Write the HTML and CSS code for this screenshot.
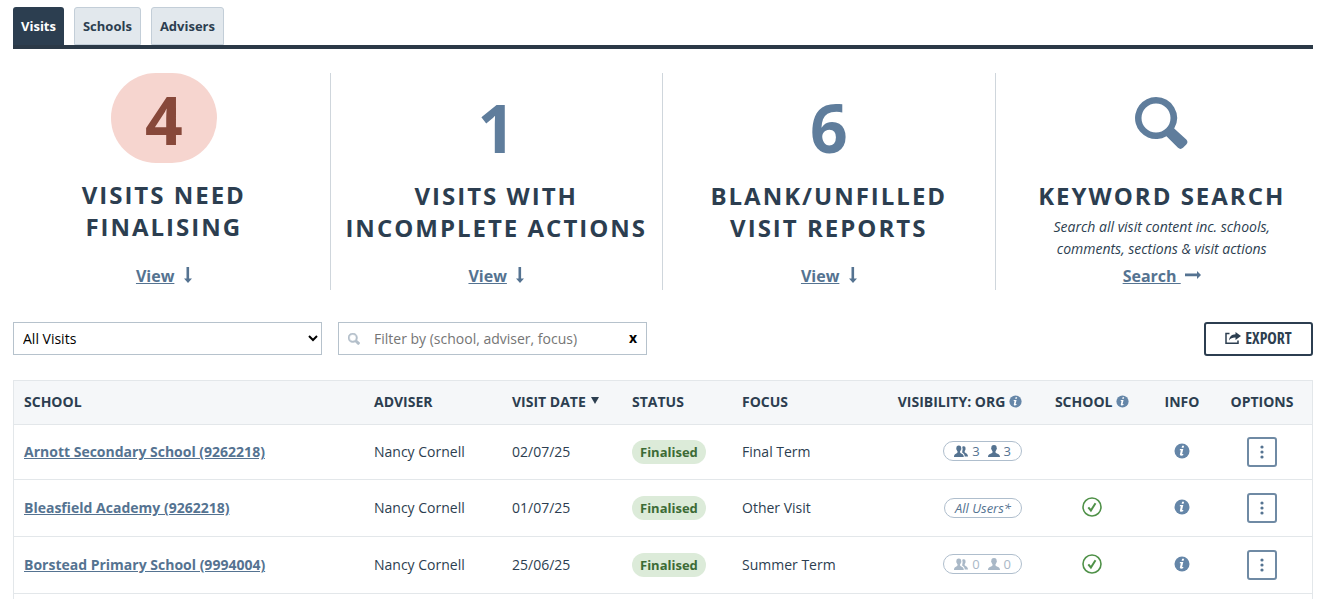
FILE: index.html
```html
<!DOCTYPE html>
<html lang="en">
<head>
    <meta charset="UTF-8">
    <meta name="viewport" content="width=device-width, initial-scale=1.0">
    <title>Visits</title>
    <link rel="stylesheet" href="styles.css">
</head>
<body>

    <!-- shared icons -->
    <svg class="sprite" aria-hidden="true">
        <symbol id="down" viewBox="0 0 8 16"><path d="M2.500 0h2.600v11.500H8L4 16 0 11.500h2.500z"/></symbol>
        <symbol id="right" viewBox="0 0 16 8"><path d="M0 2.600v2.600h12V8l4-4-4-4v2.600z"/></symbol>
        <symbol id="search" viewBox="0 0 53 53"><path fill-rule="evenodd" d="M21 0a21 21 0 1 0 10.500 39.200L43 50.800q2.500 2.200 5 0l3.300-3.300q2.300-2.500 0-5L39.200 31.500A21 21 0 0 0 21 0zm0 6.500a14.500 14.500 0 1 1 0 29 14.500 14.500 0 0 1 0-29z"/></symbol>
        <symbol id="info" viewBox="0 0 16 16"><circle cx="8" cy="8" r="7.500"/><path fill="#fff" d="M8.100 2.700h2l-.5 2h-2zM6 6h3.300l-1.200 5h1.300l-.3 1.300c-1 .6-3.500.9-3.200-.7L6.800 7.300H5.700z"/></symbol>
        <symbol id="user" viewBox="0 0 12 12"><path d="M6 0c2 0 2.800 1.200 2.700 2.900.4.500.2 1.300-.3 1.600-.2.900-.5 1.300-.9 1.700v1.400c.4 1 4.500 1.200 4.500 4.400H0c0-3.200 4.100-3.400 4.500-4.400V6.200c-.4-.4-.7-.8-.9-1.700-.5-.3-.7-1.100-.3-1.600C3.200 1.200 4 0 6 0z"/></symbol>
        <symbol id="users" viewBox="0 0 14 12"><path d="M4.800.5c1.800 0 2.500 1.100 2.400 2.700.4.500.2 1.200-.3 1.500-.2.800-.4 1.200-.8 1.600v1.300c.4 1 3.700 1.200 3.700 4.400H0c0-3.200 3.100-3.400 3.500-4.400V6.300c-.4-.4-.6-.8-.8-1.600-.5-.3-.7-1-.3-1.500C2.300 1.600 3 .5 4.800.5z"/><path d="M8.200 1.900c.5-.5 1-.6 1.500-.6 1.400 0 1.900.9 1.800 2.200.3.400.2 1-.2 1.200-.1.700-.3 1.100-.6 1.400v1.200c.4.900 3.300 1.200 3.300 4.200h-3.300c0-2.300-1.200-3.300-2.600-4.100.3-.4.200-1.500.2-1.500.5-1.300.3-2.800-.1-4z"/></symbol>
        <symbol id="tick" viewBox="0 0 20 20"><circle cx="10" cy="10" r="9" fill="none" stroke="currentColor" stroke-width="1.600"/><path d="M6.300 10.300l2.600 3.200 4.600-7.300" fill="none" stroke="currentColor" stroke-width="2"/></symbol>
        <symbol id="dots" viewBox="0 0 4 14"><circle cx="2" cy="2" r="1.600"/><circle cx="2" cy="7" r="1.600"/><circle cx="2" cy="12" r="1.600"/></symbol>
        <symbol id="export" viewBox="0 0 16 12"><path d="M4.500 1.500H1v9.800h12V8.500" fill="none" stroke="currentColor" stroke-width="1.500"/><path d="M10.500 0L16 4l-5.500 4V5.600C7.600 5.500 5.500 6.300 4 8.500 4.300 4.800 6.500 2.500 10.500 2.300z"/></symbol>
    </svg>

    <nav class="tabs">
        <a class="tab active" href="#">Visits</a>
        <a class="tab" href="#">Schools</a>
        <a class="tab" href="#">Advisers</a>
    </nav>

    <section class="summary">
        <div class="card">
            <div class="figure alert">4</div>
            <h2>Visits need finalising</h2>
            <p class="card-link"><a href="#">View</a> <svg class="icon-down"><use href="#down"/></svg></p>
        </div>
        <div class="card">
            <div class="figure">1</div>
            <h2>Visits with incomplete actions</h2>
            <p class="card-link"><a href="#">View</a> <svg class="icon-down"><use href="#down"/></svg></p>
        </div>
        <div class="card">
            <div class="figure">6</div>
            <h2>Blank/unfilled visit reports</h2>
            <p class="card-link"><a href="#">View</a> <svg class="icon-down"><use href="#down"/></svg></p>
        </div>
        <div class="card">
            <div class="figure"><svg class="icon-big"><use href="#search"/></svg></div>
            <h2>Keyword search</h2>
            <p class="hint">Search all visit content inc. schools, comments, sections &amp; visit actions</p>
            <p class="card-link"><a href="#">Search&nbsp;</a> <svg class="icon-right"><use href="#right"/></svg></p>
        </div>
    </section>

    <form class="toolbar">
        <select class="field" aria-label="Show visits">
            <option>All Visits</option>
        </select>
        <div class="field filter">
            <svg class="icon-search"><use href="#search"/></svg>
            <input type="text" aria-label="Filter visits" placeholder="Filter by (school, adviser, focus)">
            <button class="clear" type="button" aria-label="Clear filter">x</button>
        </div>
        <button class="export" type="button"><svg class="icon-export"><use href="#export"/></svg>EXPORT</button>
    </form>

    <table class="visits">
        <thead>
            <tr>
                <th>School</th>
                <th class="col-adviser">Adviser</th>
                <th class="col-date">Visit date <span class="sort"></span></th>
                <th class="col-status">Status</th>
                <th class="col-focus">Focus</th>
                <th class="col-org">Visibility: Org <svg class="icon-info small"><use href="#info"/></svg></th>
                <th class="col-school">School <svg class="icon-info small"><use href="#info"/></svg></th>
                <th class="col-info">Info</th>
                <th class="col-options">Options</th>
            </tr>
        </thead>
        <tbody>
            <tr>
                <td><a href="#">Arnott Secondary School (9262218)</a></td>
                <td>Nancy Cornell</td>
                <td>02/07/25</td>
                <td><span class="status">Finalised</span></td>
                <td>Final Term</td>
                <td class="col-org"><span class="pill"><svg class="icon-users"><use href="#users"/></svg>3<svg class="icon-user"><use href="#user"/></svg>3</span></td>
                <td class="col-school"></td>
                <td class="col-info"><svg class="icon-info"><use href="#info"/></svg></td>
                <td class="col-options"><button class="options" aria-label="Options"><svg class="icon-dots"><use href="#dots"/></svg></button></td>
            </tr>
            <tr>
                <td><a href="#">Bleasfield Academy (9262218)</a></td>
                <td>Nancy Cornell</td>
                <td>01/07/25</td>
                <td><span class="status">Finalised</span></td>
                <td>Other Visit</td>
                <td class="col-org"><span class="pill all">All Users*</span></td>
                <td class="col-school"><svg class="icon-tick"><use href="#tick"/></svg></td>
                <td class="col-info"><svg class="icon-info"><use href="#info"/></svg></td>
                <td class="col-options"><button class="options" aria-label="Options"><svg class="icon-dots"><use href="#dots"/></svg></button></td>
            </tr>
            <tr>
                <td><a href="#">Borstead Primary School (9994004)</a></td>
                <td>Nancy Cornell</td>
                <td>25/06/25</td>
                <td><span class="status">Finalised</span></td>
                <td>Summer Term</td>
                <td class="col-org"><span class="pill none"><svg class="icon-users"><use href="#users"/></svg>0<svg class="icon-user"><use href="#user"/></svg>0</span></td>
                <td class="col-school"><svg class="icon-tick"><use href="#tick"/></svg></td>
                <td class="col-info"><svg class="icon-info"><use href="#info"/></svg></td>
                <td class="col-options"><button class="options" aria-label="Options"><svg class="icon-dots"><use href="#dots"/></svg></button></td>
            </tr>
        </tbody>
        <tfoot>
            <tr><td colspan="9"></td></tr>
        </tfoot>
    </table>

</body>
</html>
```
FILE: styles.css
```css
* {
    box-sizing: border-box;
}
body {
    margin: 0;
    padding: 7px 11px 0 13px;
    overflow-x: hidden;
    font-family: "Open Sans", sans-serif;
    font-size: 14px;
    line-height: 22px;
    color: #2c3e50;
    background-color: #fff;
}
a {
    color: #557391;
}
svg {
    fill: currentColor;
}
.sprite {
    display: none;
}

/* tabs */
.tabs {
    display: flex;
    gap: 10px;
    border-bottom: 4px solid #2b3947;
}
.tab {
    padding: 8px;
    border: 1px solid #c3ced8;
    border-radius: 3px 3px 0 0;
    background-color: #e2e8ed;
    color: #2c3e50;
    font-size: 13px;
    line-height: 20px;
    font-weight: 700;
    text-decoration: none;
}
.tab.active {
    padding: 9px 8px;
    border: none;
    background-color: #2c3e50;
    color: #fff;
}

/* summary cards */
.summary {
    display: grid;
    grid-template-columns: repeat(4, 1fr);
    margin: 24px -15px 0;
}
.card {
    display: flex;
    flex-direction: column;
    align-items: center;
    min-height: 217px;
    padding: 0 14px;
    border-right: 1px solid #cfd6dc;
    text-align: center;
}
.card:last-child {
    border-right: none;
}
.figure {
    height: 98px;
    padding: 8px 34px 0;
    font-size: 66px;
    line-height: 92px;
    font-weight: 700;
    color: #5f7d9c;
}
.figure.alert {
    height: 90px;
    margin-bottom: 7px;
    padding-top: 0;
    border-radius: 45px;
    background-color: #f6d5cf;
    color: #87483a;
}
.card h2 {
    margin: 9px 0 0;
    font-size: 24px;
    line-height: 32px;
    font-weight: 700;
    letter-spacing: 2px;
    text-transform: uppercase;
}
.hint {
    max-width: 240px;
    margin: 4px 0 0;
    font-style: italic;
}
.card-link {
    margin: auto 0 3px;
    font-size: 16px;
    font-weight: 700;
    color: #557391;
}
.icon-down {
    width: 8px;
    height: 16px;
    margin-left: 5px;
    vertical-align: -1px;
}
.icon-right {
    width: 16px;
    height: 8px;
    margin-bottom: 3px;
}
.icon-big {
    display: block;
    width: 53px;
    height: 53px;
    margin-top: 16px;
}

/* toolbar */
.toolbar {
    display: flex;
    gap: 16px;
    margin: 32px 0 24px;
}
.field {
    width: 309px;
    height: 33px;
    padding: 0 5px;
    border: 1px solid #b6c2cc;
    border-radius: 0;
    background-color: #fff;
    font: 14px "Open Sans", sans-serif;
    color: #000;
}
.filter {
    display: flex;
    align-items: center;
    padding: 0 9px;
}
.filter input {
    flex: 1;
    min-width: 0;
    padding: 0 0 0 14px;
    border: none;
    background: none;
    font: inherit;
}
.icon-search {
    width: 12px;
    height: 12px;
    color: #b3bfca;
    stroke: currentColor;
    stroke-width: 2px;
}
.clear {
    padding: 0 0 2px;
    border: none;
    background: none;
    font: 700 14px "Open Sans", sans-serif;
}
.export {
    display: flex;
    align-items: center;
    justify-content: center;
    gap: 4px;
    width: 109px;
    height: 34px;
    padding: 0 0 2px;
    margin-left: auto;
    border: 2px solid #2c3e50;
    border-radius: 3px;
    background-color: #fff;
    color: #2c3e50;
    font: 700 16px "Open Sans Condensed", "Liberation Sans Narrow", "Open Sans", sans-serif;
}
.icon-export {
    width: 16px;
    height: 12px;
}

/* visits table */
.visits {
    width: 100%;
    table-layout: fixed;
    border-collapse: separate;
    border-spacing: 0;
    border: 1px solid #e3e7ea;
    border-bottom: none;
}
.visits th,
.visits td {
    height: 57px;
    padding: 0 10px;
    border-bottom: 1px solid #e3e7ea;
    text-align: left;
}
.visits th {
    height: 44px;
    padding-bottom: 2px;
    background-color: #f5f7f9;
    font-weight: 700;
    text-transform: uppercase;
    white-space: nowrap;
}
.visits tbody tr:first-child td {
    height: 55px;
}
.visits tfoot td {
    height: 6px;
    border-bottom: none;
}
.visits td a {
    font-weight: 700;
}
.visits .col-adviser { width: 138px; }
.visits .col-date { width: 120px; }
.visits .col-status { width: 110px; }
.visits .col-focus { width: 140px; }
.visits .col-org { width: 160px; text-align: right; }
.visits .col-school { width: 120px; text-align: center; }
.visits .col-info { width: 60px; text-align: center; }
.visits .col-options { width: 100px; text-align: center; }
.sort {
    display: inline-block;
    margin-left: 2px;
    border: 4px solid transparent;
    border-top: 7px solid #2c3e50;
    border-bottom: none;
    vertical-align: 3px;
}
.status {
    display: inline-block;
    padding: 0 8px;
    border-radius: 12px;
    background-color: #dcebd9;
    color: #3c6b36;
    font-size: 13px;
    line-height: 24px;
    font-weight: 700;
}
.pill {
    display: inline-flex;
    align-items: center;
    gap: 4px;
    height: 20px;
    padding: 0 10px;
    border: 1px solid #afbecd;
    border-radius: 10px;
    color: #557391;
    font-size: 13px;
}
.pill.all {
    font-style: italic;
}
.pill.none {
    color: #a9b8c7;
}
.icon-users {
    width: 14px;
    height: 12px;
}
.icon-user {
    width: 12px;
    height: 12px;
    margin-left: 4px;
}
.icon-info {
    width: 16px;
    height: 16px;
    color: #6586a8;
    vertical-align: -2px;
}
.icon-info.small {
    width: 13px;
    height: 13px;
    vertical-align: -1px;
}
.icon-tick {
    width: 20px;
    height: 20px;
    color: #4f9148;
    vertical-align: -3px;
}
.options {
    width: 30px;
    height: 30px;
    padding: 0;
    border: 2px solid #6f8aa4;
    border-radius: 3px;
    background-color: #fff;
    color: #557391;
    vertical-align: middle;
}
.icon-dots {
    display: block;
    width: 4px;
    height: 14px;
    margin: auto;
}
```
